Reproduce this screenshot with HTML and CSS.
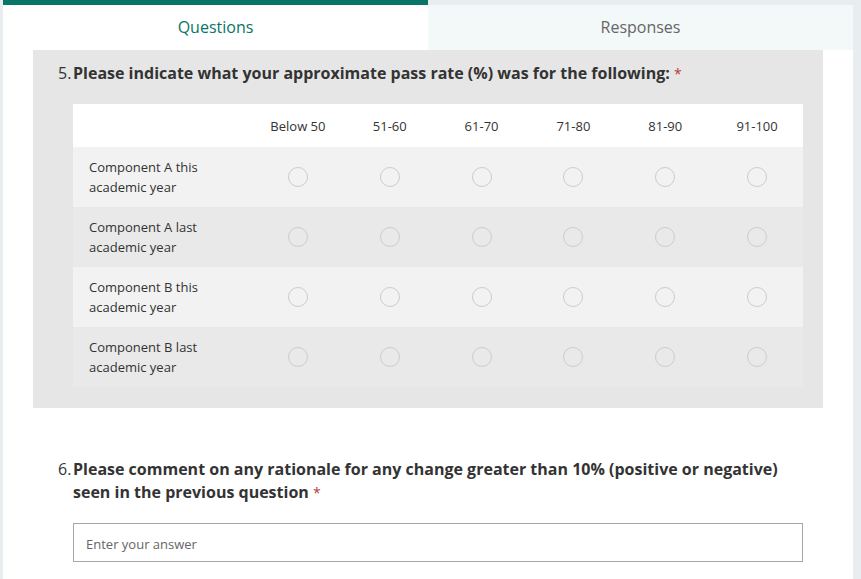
FILE: index.html
```html
<!DOCTYPE html>
<html lang="en">
<head>
    <meta charset="UTF-8">
    <link rel="stylesheet" href="styles.css">
    <title>Form</title>
</head>
<body>
    <div id="card">
        <div class="tabs">
            <div class="tab active">Questions</div>
            <div class="tab">Responses</div>
        </div>

        <div class="question grey">
            <div class="q-title">
                <span class="q-num">5.</span>
                <span class="q-text">Please indicate what your approximate pass rate (%) was for the following: <span class="req">*</span></span>
            </div>

            <table class="likert">
                <thead>
                    <tr>
                        <th class="label-col"></th>
                        <th>Below 50</th>
                        <th>51-60</th>
                        <th>61-70</th>
                        <th>71-80</th>
                        <th>81-90</th>
                        <th>91-100</th>
                    </tr>
                </thead>
                <tbody>
                    <tr>
                        <td class="label-col">Component A this academic year</td>
                        <td><span class="radio"></span></td>
                        <td><span class="radio"></span></td>
                        <td><span class="radio"></span></td>
                        <td><span class="radio"></span></td>
                        <td><span class="radio"></span></td>
                        <td><span class="radio"></span></td>
                    </tr>
                    <tr>
                        <td class="label-col">Component A last academic year</td>
                        <td><span class="radio"></span></td>
                        <td><span class="radio"></span></td>
                        <td><span class="radio"></span></td>
                        <td><span class="radio"></span></td>
                        <td><span class="radio"></span></td>
                        <td><span class="radio"></span></td>
                    </tr>
                    <tr>
                        <td class="label-col">Component B this academic year</td>
                        <td><span class="radio"></span></td>
                        <td><span class="radio"></span></td>
                        <td><span class="radio"></span></td>
                        <td><span class="radio"></span></td>
                        <td><span class="radio"></span></td>
                        <td><span class="radio"></span></td>
                    </tr>
                    <tr>
                        <td class="label-col">Component B last academic year</td>
                        <td><span class="radio"></span></td>
                        <td><span class="radio"></span></td>
                        <td><span class="radio"></span></td>
                        <td><span class="radio"></span></td>
                        <td><span class="radio"></span></td>
                        <td><span class="radio"></span></td>
                    </tr>
                </tbody>
            </table>
        </div>

        <div class="question">
            <div class="q-title">
                <span class="q-num">6.</span>
                <span class="q-text">Please comment on any rationale for any change greater than 10% (positive or negative) seen in the previous question <span class="req">*</span></span>
            </div>
            <div class="answer">Enter your answer</div>
        </div>
    </div>
</body>
</html>
```

FILE: styles.css
```css
body {
    margin: 0;
    padding: 0;
    background-color: #e8eef0;
    font-family: "Open Sans", "Liberation Sans", sans-serif;
    color: #333;
}

#card {
    width: 850px;
    margin-left: 3px;
    height: 579px;
    background-color: #ffffff;
    overflow: hidden;
}

.tabs {
    display: flex;
}

.tab {
    flex: 1;
    height: 45px;
    line-height: 45px;
    text-align: center;
    font-size: 16px;
    color: #666;
    background-color: #f3f8f9;
    border-top: 5px solid #e8eef0;
}

.tab.active {
    color: #077568;
    background-color: #ffffff;
    border-top-color: #077568;
}

.question {
    margin: 0 30px;
    padding: 12px 20px 21px 40px;
}

.question.grey {
    background-color: #e6e6e6;
}

.q-title {
    display: flex;
    margin-left: -15px;
    font-size: 16px;
    line-height: 23px;
}

.q-num {
    width: 15px;
    flex-shrink: 0;
}

.q-text {
    font-weight: bold;
}

.req {
    color: #b83a3a;
    font-weight: normal;
    font-size: 14px;
}

.likert {
    width: 730px;
    margin-top: 19px;
    border-collapse: collapse;
    table-layout: fixed;
    font-size: 13px;
}

.likert th {
    height: 43px;
    background-color: #ffffff;
    font-weight: normal;
    text-align: center;
    padding: 0;
}

.likert td {
    height: 60px;
    padding: 0;
    text-align: center;
    background-color: #f2f2f2;
}

.likert tbody tr:nth-child(even) td {
    background-color: #e9e9e9;
}

.likert .label-col {
    width: 163px;
    padding-left: 16px;
    text-align: left;
    line-height: 20px;
}

.radio {
    display: inline-block;
    width: 18px;
    height: 18px;
    border: 1px solid #cccccc;
    border-radius: 50%;
    vertical-align: middle;
}

.question + .question {
    padding-top: 50px;
}

.answer {
    margin-top: 19px;
    height: 35px;
    padding-top: 2px;
    line-height: 37px;
    padding-left: 12px;
    border: 1px solid #a6a6a6;
    font-size: 13px;
    color: #666;
}
```
